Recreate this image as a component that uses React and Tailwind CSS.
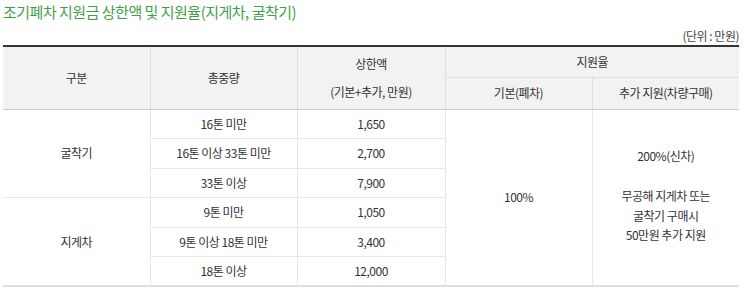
const rows = [
  { weight: "16톤 미만", amount: "1,650" },
  { weight: "16톤 이상 33톤 미만", amount: "2,700" },
  { weight: "33톤 이상", amount: "7,900" },
  { weight: "9톤 미만", amount: "1,050" },
  { weight: "9톤 이상 18톤 미만", amount: "3,400" },
  { weight: "18톤 이상", amount: "12,000" },
];

const font = { fontFamily: '"Noto Sans CJK KR", "Noto Sans", sans-serif' };

function App() {
  return (
    <div className="w-[745px] h-[300px] bg-white pl-[3px] pr-[6px] pt-[1px] text-[#333]" style={font}>
      <h2 className="h-[22px] text-[15px] leading-[22px] tracking-[-0.5px] text-[#3f9f4b]">
        조기폐차 지원금 상한액 및 지원율(지게차, 굴착기)
      </h2>
      <p className="mt-[4px] h-[18px] text-right text-[12px] leading-[18px] tracking-[-0.5px] text-[#444]">
        (단위 : 만원)
      </p>
      <table className="w-[736px] table-fixed border-collapse border-t-2 border-t-[#333] text-center text-[12px] leading-[16px] tracking-[-0.5px]">
        <colgroup>
          <col className="w-[147px]" />
          <col className="w-[147px]" />
          <col className="w-[148px]" />
          <col className="w-[147px]" />
          <col className="w-[147px]" />
        </colgroup>
        <thead className="bg-[#f2f2f2]">
          <tr className="h-[31px]">
            <th rowSpan={2} className="border-r border-b border-r-[#ddd] border-b-[#ccc] font-normal">
              구분
            </th>
            <th rowSpan={2} className="border-r border-b border-r-[#ddd] border-b-[#ccc] font-normal">
              총중량
            </th>
            <th rowSpan={2} className="border-r border-b border-r-[#ddd] border-b-[#ccc] font-normal leading-[28px]">
              상한액
              <br />
              (기본+추가, 만원)
            </th>
            <th colSpan={2} className="border-b border-b-[#ddd] font-normal">
              지원율
            </th>
          </tr>
          <tr className="h-[32px]">
            <th className="border-r border-b border-r-[#ddd] border-b-[#ccc] font-normal">
              기본(폐차)
            </th>
            <th className="border-b border-b-[#ccc] font-normal">추가 지원(차량구매)</th>
          </tr>
        </thead>
        <tbody>
          {rows.map((r, i) => (
            <tr key={i} className={`h-[29.5px] ${i === 5 ? "border-b-2 border-b-[#ddd]" : "border-b border-b-[#e8e8e8]"}`}>
              {i === 0 && (
                <td rowSpan={3} className="border-r border-r-[#e8e8e8]">
                  굴착기
                </td>
              )}
              {i === 3 && (
                <td rowSpan={3} className="border-t border-t-[#e8e8e8] border-r border-r-[#e8e8e8]">
                  지게차
                </td>
              )}
              <td className="border-r border-r-[#e8e8e8]">{r.weight}</td>
              <td className="border-r border-r-[#e8e8e8]">{r.amount}</td>
              {i === 0 && (
                <>
                  <td rowSpan={6} className="border-r border-r-[#e8e8e8]">
                    100%
                  </td>
                  <td rowSpan={6} className="leading-[20px]">
                    <div className="pb-[4px]">
                      200%(신차)
                      <br />
                      <br />
                      <span className="block leading-[19px]">
                        <span className="leading-[20px]">무공해 지게차 또는</span>
                        <br />
                        굴착기 구매시
                        <br />
                        50만원 추가 지원
                      </span>
                    </div>
                  </td>
                </>
              )}
            </tr>
          ))}
        </tbody>
      </table>
    </div>
  );
}

export default App;
